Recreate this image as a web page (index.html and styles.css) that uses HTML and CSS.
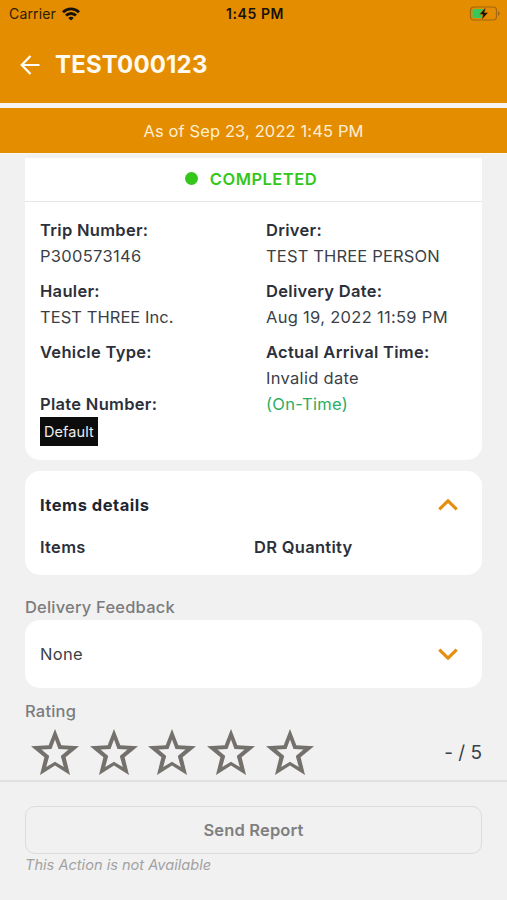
FILE: index.html
```html
<!DOCTYPE html>
<html lang="en">
<head>
<meta charset="utf-8">
<title>TEST000123</title>
<link rel="stylesheet" href="styles.css">
</head>
<body>
<div class="screen">
  <header class="header">
    <div class="status-bar">
      <div class="carrier"><span>Carrier</span>
        <svg class="wifi" width="18" height="14" viewBox="0 0 18 14" fill="none" stroke="#17120a" stroke-width="2.8"><path d="M1 5.2C5.600.7 12.400.7 17 5.200M4 8.600c2.800-2.800 7.200-2.800 10 0"/><path d="M9 13.600 6.300 10.900c1.500-1.500 3.900-1.500 5.400 0z" fill="#17120a" stroke="none"/></svg>
      </div>
      <div class="clock">1:45 PM</div>
      <svg class="battery" width="32" height="16" viewBox="0 0 32 16"><rect x="1.500" y="1" width="26" height="13" rx="3.500" fill="none" stroke="#a06712" stroke-width="1.200"/><path d="M5 3h9l-2 9H5a1.500 1.500 0 0 1-1.500-1.500v-6A1.500 1.500 0 0 1 5 3z" fill="#35c759"/><path d="M29 5.300c2.200.7 2.200 3.700 0 4.400z" fill="#a06712"/><path d="M17 1 10.300 8.500h3.600L12.500 14l6.800-7.500h-3.800z" fill="#17120a" stroke="#e58d00" stroke-width=".5"/></svg>
    </div>
    <div class="title-bar">
      <svg class="back" width="20" height="20" viewBox="0 0 20 20" fill="none" stroke="#fff" stroke-width="2.200"><path d="M19.500 10H2M10.500 1 1.700 10l8.800 9"/></svg>
      <h1 class="title">TEST000123</h1>
    </div>
  </header>
  <div class="as-of"><span>As of Sep 23, 2022 1:45 PM</span></div>
  <main class="content">
    <section class="card trip">
      <div class="trip-status"><i class="dot"></i><span>COMPLETED</span></div>
      <div class="trip-grid">
        <div class="column">
          <div class="field"><b>Trip Number:</b><span>P300573146</span></div>
          <div class="field"><b>Hauler:</b><span class="tight">TEST THREE Inc.</span></div>
          <div class="field last"><b>Vehicle Type:</b><span></span></div>
          <div class="field last"><b>Plate Number:</b><span class="plate">Default</span></div>
        </div>
        <div class="column">
          <div class="field"><b>Driver:</b><span class="name">TEST THREE PERSON</span></div>
          <div class="field"><b>Delivery Date:</b><span>Aug 19, 2022 11:59 PM</span></div>
          <div class="field last"><b>Actual Arrival Time:</b><span>Invalid date</span><span class="on-time">(On-Time)</span></div>
        </div>
      </div>
    </section>
    <section class="card items">
      <div class="row"><b class="strong">Items details</b>
        <svg class="chevron" width="20" height="12" viewBox="0 0 20 12"><path d="M1.300 10.300 10 1.900l8.700 8.400" fill="none" stroke="#e58d0c" stroke-width="3.200"/></svg>
      </div>
      <div class="items-head"><b>Items</b><b>DR Quantity</b></div>
    </section>
    <div class="label feedback-label">Delivery Feedback</div>
    <section class="card select row"><span>None</span>
      <svg class="chevron" width="20" height="12" viewBox="0 0 20 12"><path d="M1.300 1.700 10 10.100l8.700-8.400" fill="none" stroke="#e58d0c" stroke-width="3.200"/></svg>
    </section>
    <div class="label rating-label">Rating</div>
    <div class="rating">
      <div class="stars">
        <svg class="star" viewBox="0 0 48 46"><use href="#star"/></svg>
        <svg class="star" viewBox="0 0 48 46"><use href="#star"/></svg>
        <svg class="star" viewBox="0 0 48 46"><use href="#star"/></svg>
        <svg class="star" viewBox="0 0 48 46"><use href="#star"/></svg>
        <svg class="star" viewBox="0 0 48 46"><path id="star" fill-rule="evenodd" fill="#74716d" d="M24 0 30.300 16.200 48 17.300 34.600 28.300 39 46 24 36.500 9 46 13.400 28.300 0 17.300 17.700 16.200zM24 10.500 20.500 20 10.500 20.500 18.200 27 15.200 38 24 32.800 32.800 38 29.800 27 37.500 20.500 27.500 20z"/></svg>
      </div>
      <div class="score">- / 5</div>
    </div>
  </main>
  <footer class="footer">
    <button class="send" disabled>Send Report</button>
    <div class="note">This Action is not Available</div>
  </footer>
</div>
</body>
</html>
```
FILE: styles.css
```css
* { box-sizing: border-box; }
body {
  margin: 0;
  font-family: Inter, "Liberation Sans", sans-serif;
  font-size: 16.5px;
  line-height: 26px;
  letter-spacing: 0.3px;
  color: #3b3f48;
  background: #f1f1f1;
}
.screen { width: 507px; height: 900px; display: flex; flex-direction: column; overflow: hidden; }
.header { height: 103px; background: #e58d00; }
.status-bar {
  height: 28px;
  padding: 0 6px 0 9px;
  display: grid;
  grid-template-columns: 1fr auto 1fr;
  align-items: center;
  font-size: 14px;
  color: #2b1c05;
}
.carrier { display: flex; align-items: center; gap: 6px; letter-spacing: 0.15px; }
.clock { font-weight: 600; letter-spacing: 0.6px; color: #17120a; }
.battery { justify-self: end; }
.title-bar { display: flex; align-items: center; height: 73px; padding-left: 20px; gap: 15px; }
.title { margin: 0; font-size: 24px; font-weight: 700; letter-spacing: 0.15px; color: #fffaf0; }
.as-of {
  height: 50px;
  border-top: 5.5px solid #f6f4f5;
  background: #e58d00;
  color: #ffefd2;
  text-align: center;
  letter-spacing: 0.12px;
  padding-top: 10px;
}
.content { flex: none; height: 627px; padding: 4px 25px 0; border-top: 1px solid #f9f5ef; }
.card { background: #fff; border-radius: 15px; }
.trip { height: 302px; border-radius: 0 0 15px 15px; }
.trip-status {
  height: 44px;
  display: flex;
  align-items: center;
  justify-content: center;
  gap: 12px;
  padding: 0 5px 2px 0;
  border-bottom: 1px solid #e5e6e8;
  color: #33c71b;
  font-weight: 600;
  letter-spacing: 0.5px;
}
.dot { width: 13px; height: 13px; border-radius: 50%; background: #33c71b; }
.trip-grid { display: grid; grid-template-columns: 226px 1fr; padding: 15px 15px 0; }
.field { display: flex; flex-direction: column; align-items: flex-start; min-height: 52px; margin-bottom: 9px; }
.field.last { margin-bottom: 0; }
b { font-weight: 600; color: #2c303b; }
.tight { letter-spacing: 0.05px; }
.name { letter-spacing: 0.16px; }
.on-time { color: #2cad61; }
.field .plate { height: 29px; padding: 2px 4px 0; font-size: 14.5px; letter-spacing: 0.1px; background: #0c0c0c; color: #eee; }
.items { height: 104px; margin-top: 11px; padding: 21px 24px 0 15px; }
.row { display: flex; justify-content: space-between; align-items: center; }
.strong { letter-spacing: 0.5px; font-weight: 650; color: #1f2531; }
.items-head { display: grid; grid-template-columns: 214px 1fr; margin-top: 16px; }
.label { font-weight: 500; letter-spacing: 0.2px; color: #7c7c7e; }
.feedback-label { margin-top: 19px; }
.select { height: 68px; padding: 0 24px 0 15px; }
.rating-label { margin-top: 10px; }
.rating { display: flex; justify-content: space-between; margin-top: 5px; }
.stars { display: flex; gap: 10.7px; padding-left: 6px; }
.star { width: 48px; height: 46px; }
.score { font-size: 19px; line-height: 48px; letter-spacing: 0; }
.footer { flex: 1; border-top: 2px solid #dfe1e1; padding: 24px 25px 0; }
.send {
  display: block;
  width: 100%;
  height: 48px;
  border: 1.5px solid #d9dbdc;
  border-radius: 10px;
  background: #f1f1f1;
  color: #7f7f82;
  font: 600 16.5px/26px Inter, sans-serif;
  letter-spacing: 0.15px;
}
.note { font-size: 14.6px; line-height: 22px; letter-spacing: 0; font-style: italic; color: #a2a2a2; }
```
